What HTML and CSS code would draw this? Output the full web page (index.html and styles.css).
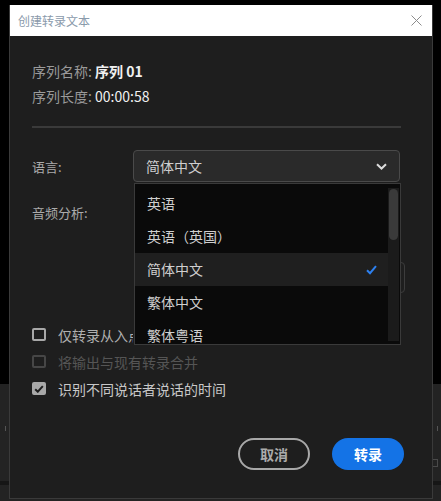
FILE: index.html
```html
<!DOCTYPE html>
<html lang="zh-CN">
<head>
    <meta charset="UTF-8">
    <title>创建转录文本</title>
    <link rel="stylesheet" href="styles.css">
</head>
<body>
    <div class="app">
        <div class="app-top"></div>
        <div class="app-panel">
            <span class="tick"></span>
            <span class="tick-col">
                <span class="tick"></span>
                <span class="tick-box"></span>
            </span>
        </div>
        <div class="app-strip"></div>
        <div class="app-panel low"></div>
    </div>

    <div class="dialog">
        <div class="dialog-title">
            <span>创建转录文本</span>
            <svg class="close" width="11" height="11" viewBox="0 0 11 11">
                <path d="M0.5 0.5l10 10M10.5 0.5l-10 10" stroke="#8c8c8c" stroke-width="1" fill="none"/>
            </svg>
        </div>
        <div class="dialog-body">
            <div class="info"><span>序列名称: </span><b class="value">序列 01</b></div>
            <div class="info"><span>序列长度: </span><span class="value time">00:00:58</span></div>
            <div class="divider"></div>

            <div class="field">
                <label>语言:</label>
                <div class="select">
                    <span>简体中文</span>
                    <svg width="11" height="7" viewBox="0 0 11 7">
                        <path d="M1 1.2l4.5 4.3 4.5-4.3" stroke="#dcdcdc" stroke-width="2" fill="none"/>
                    </svg>
                </div>
            </div>
            <div class="field audio">
                <label>音频分析:</label>
            </div>
            <div class="field under">
                <div class="under-box"></div>
            </div>

            <div class="checks">
                <div class="check">
                    <span class="box"></span>
                    <span class="clip">仅转录从入点到出点</span>
                </div>
                <div class="check disabled">
                    <span class="box"></span>
                    <span>将输出与现有转录合并</span>
                </div>
                <div class="check on">
                    <span class="box">
                        <svg width="10" height="8" viewBox="0 0 10 8">
                            <path d="M1.2 4.2l2.6 2.5 5-5.5" stroke="#1e1e1e" stroke-width="2" fill="none"/>
                        </svg>
                    </span>
                    <span>识别不同说话者说话的时间</span>
                </div>
            </div>

            <div class="actions">
                <button class="btn btn-outline">取消</button>
                <button class="btn btn-primary">转录</button>
            </div>
        </div>

        <div class="menu">
            <div class="menu-list">
                <div class="menu-item">英语</div>
                <div class="menu-item">英语（英国）</div>
                <div class="menu-item active">
                    <span>简体中文</span>
                    <svg width="11" height="10" viewBox="0 0 11 10">
                        <path d="M1 5.2l3 3 6-7" stroke="#2d80f0" stroke-width="2" fill="none"/>
                    </svg>
                </div>
                <div class="menu-item">繁体中文</div>
                <div class="menu-item">繁体粤语</div>
            </div>
            <div class="scrollbar">
                <div class="thumb"></div>
            </div>
        </div>
    </div>
</body>
</html>
```
FILE: styles.css
```css
body {
    margin: 0;
    width: 441px;
    height: 501px;
    overflow: hidden;
    position: relative;
    background: #000;
    font-family: "Noto Sans CJK SC", "Liberation Sans", sans-serif;
}

/* app behind the modal */
.app-top {
    height: 384px;
    background: #000;
}
.app-panel {
    height: 97px;
    background: #232323;
    display: flex;
    justify-content: space-between;
    align-items: flex-start;
    padding: 42px 3px 0 5px;
    box-sizing: border-box;
}
.app-panel.low {
    height: 16px;
    padding: 0;
}
.app-strip {
    height: 4px;
    background: #161616;
}
.tick {
    display: block;
    width: 1px;
    height: 5px;
    background: #555;
}
.tick-col {
    display: flex;
    flex-direction: column;
    align-items: flex-end;
    gap: 28px;
}
.tick-box {
    width: 4px;
    height: 6px;
    border: 1px solid #4a4a4a;
}

/* dialog */
.dialog {
    position: absolute;
    left: 9px;
    top: 5px;
    width: 424px;
    height: 494px;
    box-sizing: border-box;
    background: #1e1e1e;
    border: 1px solid #3a3a3a;
    border-top: none;
}
.dialog-title {
    height: 31px;
    background: #fff;
    display: flex;
    align-items: center;
    justify-content: space-between;
    padding: 0 10px 0 8px;
    font-size: 12px;
    color: #8a9aab;
}
.dialog-body {
    padding: 23px 31px 0 22px;
}
.info {
    font-size: 14px;
    line-height: 25px;
    color: #9a9a9a;
}
.info .value {
    color: #f0f0f0;
}
.divider {
    height: 2px;
    background: #3a3a3a;
    margin-top: 17px;
}
.field {
    display: flex;
    align-items: center;
    margin-top: 22px;
}
.field label {
    width: 101px;
    font-size: 13px;
    color: #ababab;
}
.select {
    width: 267px;
    height: 32px;
    box-sizing: border-box;
    border: 1px solid #4a4a4a;
    border-radius: 4px;
    background: #2a2a2a;
    display: flex;
    align-items: center;
    justify-content: space-between;
    padding: 0 12px;
    font-size: 14px;
    color: #cfcfcf;
}
.field.audio {
    margin-top: 14px;
    height: 32px;
}
.field.under {
    margin-top: 34px;
    margin-right: -4px;
    justify-content: flex-end;
}
.under-box {
    width: 265px;
    height: 31px;
    box-sizing: border-box;
    border: 1px solid #3c3c3c;
    border-radius: 4px;
}

.checks {
    margin-top: 28px;
}
.check {
    height: 27px;
    display: flex;
    align-items: center;
    gap: 12px;
    font-size: 14px;
    color: #b0b0b0;
}
.check .clip {
    max-width: 75px;
    overflow: hidden;
    white-space: nowrap;
}
.check .box {
    width: 14px;
    height: 13px;
    box-sizing: border-box;
    border: 2px solid #a8a8a8;
    border-radius: 2px;
    display: flex;
    align-items: center;
    justify-content: center;
}
.check.disabled {
    color: #555;
}
.check.disabled .box {
    border-color: #464646;
}
.check.on {
    color: #c8c8c8;
}
.check.on .box {
    background: #a8a8a8;
}

.actions {
    margin-top: 36px;
    margin-right: -3px;
    display: flex;
    justify-content: flex-end;
    gap: 22px;
}
.btn {
    width: 72px;
    height: 32px;
    border-radius: 16px;
    font-family: inherit;
    font-size: 14px;
    font-weight: bold;
    box-sizing: border-box;
    padding: 0;
}
.btn-outline {
    background: transparent;
    border: 2px solid #a8a8a8;
    color: #ababab;
}
.btn-primary {
    background: #1473e6;
    border: none;
    color: #fff;
}

/* open language menu */
.menu {
    position: absolute;
    left: 124px;
    top: 178px;
    width: 267px;
    height: 162px;
    box-sizing: border-box;
    background: #0a0a0a;
    border: 1px solid #3a3a3a;
    display: flex;
    overflow: hidden;
}
.menu-list {
    width: 253px;
    padding-top: 3px;
}
.menu-item {
    height: 33px;
    line-height: 33px;
    padding: 0 11px 0 12px;
    font-size: 14px;
    color: #cfcfcf;
    display: flex;
    align-items: center;
    justify-content: space-between;
}
.menu-item.active {
    background: #1f1f1f;
}
.scrollbar {
    width: 11px;
    margin: 4px 0 3px;
    background: #1b1b1b;
}
.thumb {
    height: 51px;
    margin: 1px 1px 0;
    border-radius: 5px;
    background: #3a3a3a;
}
```
